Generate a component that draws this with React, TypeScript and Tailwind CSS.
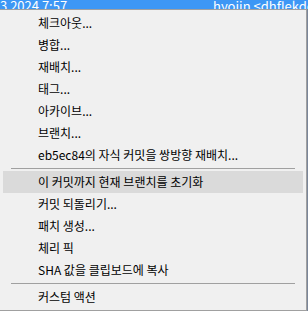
import React from 'react';

type Item = { label: string; active?: boolean } | 'sep';

const ITEMS: Item[] = [
  { label: '체크아웃...' },
  { label: '병합...' },
  { label: '재배치...' },
  { label: '태그...' },
  { label: '아카이브...' },
  { label: '브랜치...' },
  { label: 'eb5ec84의 자식 커밋을 쌍방향 재배치...' },
  'sep',
  { label: '이 커밋까지 현재 브랜치를 초기화', active: true },
  { label: '커밋 되돌리기...' },
  { label: '패치 생성...' },
  { label: '체리 픽' },
  { label: 'SHA 값을 클립보드에 복사' },
  'sep',
  { label: '커스텀 액션' },
];

const App: React.FC = () => {
  return (
    <div
      className="w-[308px] h-[311px] overflow-hidden bg-[#f0f0f0] text-[12px] text-black"
      style={{ fontFamily: '"Malgun Gothic", "Noto Sans CJK KR", "Noto Sans", sans-serif' }}
    >
      {/* selected commit row behind the menu */}
      <div className="h-[9px] bg-[#3d97f5] text-white text-[13px] relative overflow-hidden">
        <div className="absolute left-0 bottom-[-4px] leading-[15px] whitespace-nowrap">3 2024 7:57</div>
        <div className="absolute left-[213px] bottom-[-4px] leading-[15px] whitespace-nowrap">hyojin &lt;dhflekddy</div>
      </div>

      <div className="flex h-[302px]">
        {/* context menu */}
        <div className="w-[307px] border-t border-r border-b border-[#a0a0a0] bg-[#f0f0f0] pt-[2px] pb-[1px] pl-[3px] pr-[3px]">
          {ITEMS.map((item, i) =>
            item === 'sep' ? (
              <div key={i} className="h-[5px] flex items-center pl-[8px] pr-[8px]">
                <div className="h-px w-full bg-[#a0a0a0]" />
              </div>
            ) : (
              <div
                key={i}
                className={`h-[22px] flex items-center pl-[35px] whitespace-nowrap ${item.active ? 'bg-[#dadada]' : ''}`}
              >
                {item.label}
              </div>
            )
          )}
        </div>
        <div className="w-px bg-[#7a8699]" />
      </div>
    </div>
  );
};

export default App;
